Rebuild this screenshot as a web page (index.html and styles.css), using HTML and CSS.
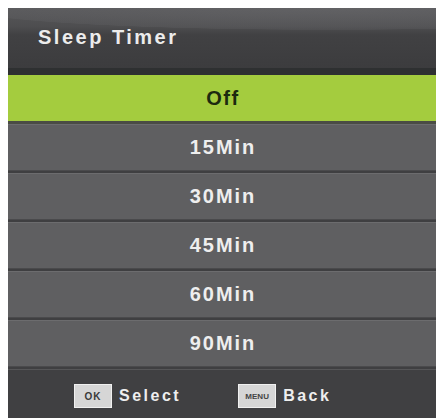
FILE: index.html
```html
<!DOCTYPE html>
<html>
<head>
<meta charset="utf-8">
<link rel="stylesheet" href="styles.css">
</head>
<body>
<div class="panel">
  <div class="header"><span class="title">Sleep Timer</span></div>
  <div class="list">
    <div class="item selected">Off</div>
    <div class="item">15Min</div>
    <div class="item">30Min</div>
    <div class="item">45Min</div>
    <div class="item">60Min</div>
    <div class="item">90Min</div>
  </div>
  <div class="footer">
    <div class="hint"><span class="key">OK</span><span class="label">Select</span></div>
    <div class="hint"><span class="key key-menu">MENU</span><span class="label">Back</span></div>
  </div>
</div>
</body>
</html>
```
FILE: styles.css
```css
html, body {
  margin: 0;
  padding: 0;
  background: #ffffff;
}
body {
  padding: 8px 4px 0 8px;
  font-family: "Liberation Sans", Arial, sans-serif;
  font-weight: bold;
}
.panel {
  width: 428px;
  height: 410px;
  background: #3f3f41;
  display: flex;
  flex-direction: column;
  overflow: hidden;
}
.header {
  height: 67px;
  flex: none;
  background:
    radial-gradient(ellipse 140% 60% at 75% 0%, rgba(120,120,124,0.35) 0%, rgba(120,120,124,0.15) 60%, rgba(0,0,0,0) 61%),
    linear-gradient(to bottom, #565658 0%, #4e4e50 30%, #414143 45%, #3c3c3e 100%);
  display: flex;
  align-items: center;
  padding-left: 30px;
  box-sizing: border-box;
  border-bottom: 7px solid #2e3031;
}
.title {
  color: #ececec;
  font-size: 20px;
  letter-spacing: 2.5px;
  margin-top: -1px;
}
.list {
  display: flex;
  flex-direction: column;
  flex: none;
}
.item {
  height: 47px;
  box-sizing: border-box;
  display: flex;
  align-items: center;
  justify-content: center;
  background: #5f5f61;
  color: #eeeeee;
  font-size: 20px;
  letter-spacing: 2px;
  padding-left: 2px;
  border-top: 1px solid #6c6c6e;
  border-bottom: 1px solid #4a4a4c;
  margin-bottom: 2px;
}
.item.selected {
  background: #a4cc3e;
  color: #1c2a0f;
  height: 49px;
  letter-spacing: 1.5px;
  border-top: none;
  border-bottom: 3px solid #4a4c45;
  margin-bottom: 0;
}
.footer {
  flex: 1;
  background: #404042;
  display: flex;
  align-items: flex-start;
  padding-top: 14px;
  padding-left: 66px;
  gap: 57px;
  border-top: 1px solid #565658;
}
.hint {
  display: flex;
  align-items: center;
  gap: 7px;
}
.key {
  width: 38px;
  height: 24px;
  background: #d6d6d6;
  border: 1px solid #f0f0f0;
  box-sizing: border-box;
  color: #3a3a3a;
  font-size: 10px;
  display: flex;
  align-items: center;
  justify-content: center;
  letter-spacing: 1px;
}
.key-menu {
  font-size: 8px;
  letter-spacing: 0;
  color: #444;
}
.label {
  color: #eeeeee;
  font-size: 16px;
  letter-spacing: 2.5px;
}
```
